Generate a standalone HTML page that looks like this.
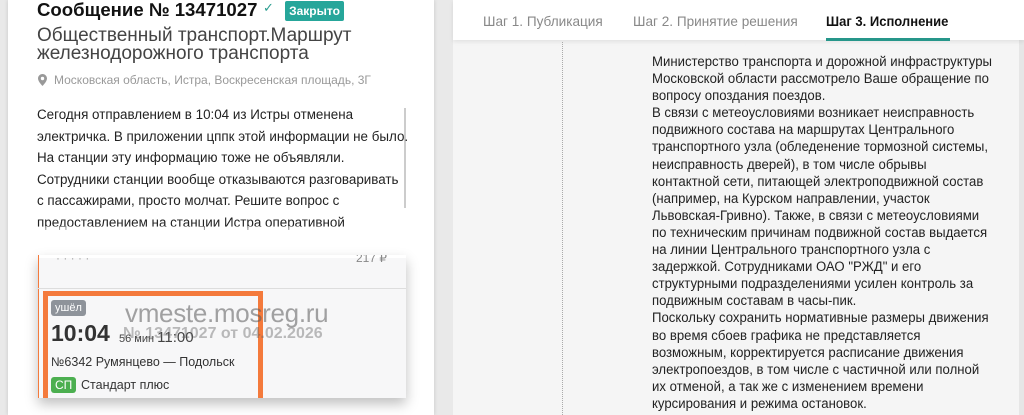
<!DOCTYPE html>
<html><head><meta charset="utf-8"><style>
*{margin:0;padding:0;box-sizing:border-box}
html,body{width:1024px;height:415px;overflow:hidden}
body{background:#e9e9e9;font-family:"Liberation Sans",sans-serif;position:relative}
.card{position:absolute;left:8px;top:0;width:426px;height:415px;background:#fff;box-shadow:0 0 4px rgba(0,0,0,.15)}
.abs{position:absolute;white-space:nowrap}
.right{position:absolute;left:453px;top:0;width:571px;height:415px;background:#f5f5f5}
.tabs{position:absolute;left:453px;top:0;width:571px;height:40px;background:#fff;box-shadow:0 2px 4px rgba(0,0,0,.08)}
.tab{position:absolute;top:13px;font-size:14px;color:#888;transform:scaleX(.97);transform-origin:left;white-space:nowrap}
.rt{position:absolute;left:652px;top:53px;font-size:13.5px;line-height:17.1px;color:#222;transform:scaleX(.975);transform-origin:left;white-space:nowrap}
.lt{position:absolute;left:37px;top:104px;height:134px;overflow:hidden;font-size:13.4px;line-height:21.6px;color:#222;white-space:nowrap}
</style></head><body>
<div class="card"></div>
<div class="abs" style="left:37px;top:-1px;font-size:18.6px;font-weight:bold;color:#111">Сообщение № 13471027</div>
<div class="abs" style="left:263px;top:0px;color:#2a9d8f;font-size:13px">✓</div>
<div class="abs" style="left:285px;top:1px;width:59px;height:20px;background:#26a69a;color:#fff;font-size:12px;font-weight:bold;text-align:center;line-height:20px;border-radius:2px">Закрыто</div>
<div class="abs" style="left:37px;top:27px;font-size:19px;line-height:18px;color:#444">Общественный транспорт.Маршрут<br>железнодорожного транспорта</div>
<svg class="abs" style="left:38px;top:74px" width="9" height="12" viewBox="0 0 9 12"><path d="M4.5 0C2 0 0 2 0 4.5 0 7.5 4.5 12 4.5 12S9 7.5 9 4.5C9 2 7 0 4.5 0zm0 6.2a1.7 1.7 0 110-3.4 1.7 1.7 0 010 3.4z" fill="#999"/></svg>
<div class="abs" style="left:54px;top:73px;font-size:12px;color:#999">Московская область, Истра, Воскресенская площадь, 3Г</div>
<div style="position:absolute;left:404px;top:108px;width:2px;height:100px;background:#ccc"></div>
<div class="lt">Сегодня отправлением в 10:04 из Истры отменена<br>электричка. В приложении цппк этой информации не было.<br>На станции эту информацию тоже не объявляли.<br>Сотрудники станции вообще отказываются разговаривать<br>с пассажирами, просто молчат. Решите вопрос с<br>предоставлением на станции Истра оперативной<br>информации по электричкам. Люди там просто замерзают</div>
<div style="position:absolute;left:8px;top:226px;width:420px;height:14px;background:linear-gradient(rgba(255,255,255,.4),#fff 80%)"></div>
<div style="position:absolute;left:38px;top:255px;width:368px;height:143px;background:#f7f7f8;box-shadow:0 6px 12px rgba(0,0,0,.25);overflow:hidden">
 <div style="position:absolute;left:0;top:0;width:368px;height:3px;background:#fff"></div>
 <div style="position:absolute;left:0;top:0;width:1px;height:143px;background:#f47a3c"></div>
 <div class="abs" style="left:18px;top:-4px;color:#aaa;font-size:12px">· · · · ·</div>
 <div class="abs" style="left:318px;top:-4px;color:#888;font-size:12px">217 ₽</div>
 <div style="position:absolute;left:0;top:33px;width:368px;height:1px;background:#ddd"></div>
 <div style="position:absolute;left:5px;top:36px;width:220px;height:110px;border:5px solid #f47a3c;border-bottom:none"></div>
 <div class="abs" style="left:13px;top:45px;background:#8e939a;color:#fff;font-size:11px;padding:2px 4px;border-radius:3px">ушёл</div>
 <div class="abs" style="left:13px;top:65px;font-size:23px;font-weight:bold;color:#333">10:04</div>
 <div class="abs" style="left:81px;top:74px;font-size:11px;color:#444">56 мин <span style="font-size:15px">11:00</span></div>
 <div class="abs" style="left:13px;top:100px;font-size:12.5px;color:#333">№6342 Румянцево — Подольск</div>
 <div class="abs" style="left:13px;top:122px;background:#4caf50;color:#fff;font-size:12px;padding:1px 4px;border-radius:3px">СП</div>
 <div class="abs" style="left:43px;top:123px;font-size:12.5px;color:#333">Стандарт плюс</div>
 <div class="abs" style="left:87px;top:43px;font-size:26px;color:rgba(90,90,90,.55);letter-spacing:-0.3px">vmeste.mosreg.ru</div>
 <div class="abs" style="left:85px;top:70px;font-size:16px;font-weight:bold;color:rgba(90,90,90,.4)">№ 13471027 от 04.02.2026</div>
</div>
<div class="right"></div>
<div style="position:absolute;left:1019px;top:40px;width:5px;height:375px;background:#e6e6e6"></div>
<div class="tabs"></div>
<div class="tab" style="left:483px">Шаг 1. Публикация</div>
<div class="tab" style="left:633px">Шаг 2. Принятие решения</div>
<div class="tab" style="left:826px;color:#111;font-weight:bold;transform:scaleX(.93)">Шаг 3. Исполнение</div>
<div style="position:absolute;left:826px;top:38px;width:124px;height:3px;background:#26968a"></div>
<div style="position:absolute;left:562px;top:42px;width:0;height:373px;border-left:1px dotted #aaa"></div>
<div class="rt">Министерство транспорта и дорожной инфраструктуры<br>Московской области рассмотрело Ваше обращение по<br>вопросу опоздания поездов.<br>В связи с метеоусловиями возникает неисправность<br>подвижного состава на маршрутах Центрального<br>транспортного узла (обледенение тормозной системы,<br>неисправность дверей), в том числе обрывы<br>контактной сети, питающей электроподвижной состав<br>(например, на Курском направлении, участок<br>Львовская-Гривно). Также, в связи с метеоусловиями<br>по техническим причинам подвижной состав выдается<br>на линии Центрального транспортного узла с<br>задержкой. Сотрудниками ОАО "РЖД" и его<br>структурными подразделениями усилен контроль за<br>подвижным составам в часы-пик.<br>Поскольку сохранить нормативные размеры движения<br>во время сбоев графика не представляется<br>возможным, корректируется расписание движения<br>электропоездов, в том числе с частичной или полной<br>их отменой, а так же с изменением времени<br>курсирования и режима остановок.</div>
</body></html>
